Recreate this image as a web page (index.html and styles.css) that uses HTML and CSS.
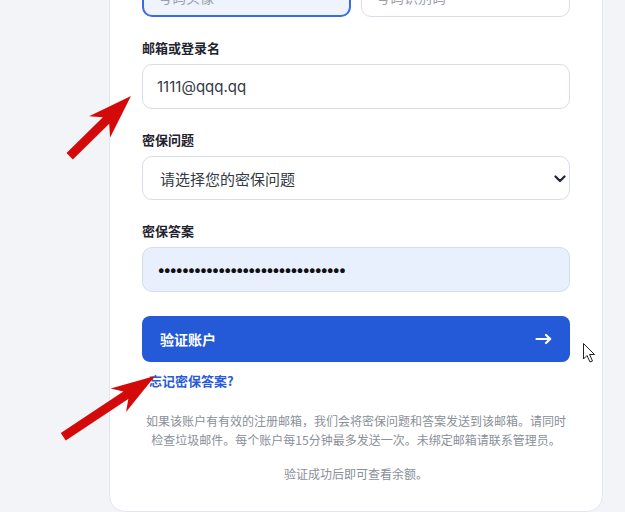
FILE: index.html
```html
<!DOCTYPE html>
<html lang="zh-CN">
<head>
<meta charset="utf-8">
<title>验证账户</title>
<link rel="stylesheet" href="styles.css">
</head>
<body>
<div class="page">
  <div class="card">
    <div class="row">
      <input class="input focused" type="text" placeholder="号码头像">
      <input class="input" type="text" placeholder="号码识别码">
    </div>

    <div class="field">
      <label class="label">邮箱或登录名</label>
      <input class="input" type="text" value="1111@qqq.qq">
    </div>

    <div class="field">
      <label class="label">密保问题</label>
      <div class="select-wrap">
        <select class="select">
          <option>请选择您的密保问题</option>
        </select>
        <svg class="chevron" width="12" height="8" viewBox="0 0 12 8"><path d="M1.5 1.5 L6 6 L10.5 1.5" fill="none" stroke="#1f2430" stroke-width="2.2" stroke-linecap="round" stroke-linejoin="round"/></svg>
      </div>
    </div>

    <div class="field">
      <label class="label">密保答案</label>
      <input class="input autofill" type="password" value="1234567890123456789012345678901">
    </div>

    <button class="btn">
      <span>验证账户</span>
      <svg width="18" height="12" viewBox="0 0 18 12"><path d="M1.5 6 H15 M11 2 L15.3 6 L11 10" fill="none" stroke="#fff" stroke-width="2.2" stroke-linecap="round" stroke-linejoin="round"/></svg>
    </button>

    <a class="link" href="#">忘记密保答案?</a>

    <p class="help">如果该账户有有效的注册邮箱，我们会将密保问题和答案发送到该邮箱。请同时检查垃圾邮件。每个账户每15分钟最多发送一次。未绑定邮箱请联系管理员。</p>
    <p class="note">验证成功后即可查看余额。</p>
  </div>
</div>

<svg class="annot" width="625" height="512" viewBox="0 0 625 512">
  <g transform="translate(131 96) rotate(-44.5)">
    <polygon points="0,0 -44,-15 -35,-4.5 -86,-4.5 -86,4.5 -35,4.5 -44,15" fill="#d40a0a"/>
  </g>
  <g transform="translate(155 376) rotate(-33.5)">
    <polygon points="0,0 -44,-14 -35,-4.5 -110,-4.5 -110,4.5 -35,4.5 -44,14" fill="#d40a0a"/>
  </g>
  <path d="M583.5 343.5 V359 L587 355.5 L590 362 L592.5 361 L589.6 354.5 L594.5 354.5 Z" fill="#fff" stroke="#222" stroke-width="1" stroke-linejoin="round"/>
</svg>
</body>
</html>
```
FILE: styles.css
```css
* { box-sizing: border-box; }
html, body { margin: 0; padding: 0; }
body {
  background: #f3f4f8;
  font-family: Inter, "Noto Sans CJK SC", sans-serif;
  width: 625px;
  height: 512px;
  overflow: hidden;
  position: relative;
}
.page {
  margin-top: -29px;
  padding-left: 109px;
}
.card {
  width: 494px;
  background: #fff;
  border: 1px solid #e3e6ee;
  border-radius: 16px;
  padding: 0 32px 28px;
}
.row {
  display: grid;
  grid-template-columns: 1fr 1fr;
  gap: 10px;
}
.input {
  display: block;
  width: 100%;
  height: 45px;
  border: 1px solid #d8dde8;
  border-radius: 10px;
  padding: 0 14px;
  font-family: Inter, "Noto Sans CJK SC", sans-serif;
  font-size: 15px;
  color: #333a45;
  background: #fff;
  outline: none;
}
.input::placeholder { color: #9aa0aa; }
.row .input { font-size: 14px; padding-top: 6px; }
.focused {
  border: 2px solid #3a6ce0;
  background: #eef3fd;
}
.autofill {
  background: #e8f0fe;
  color: #111;
  letter-spacing: -2.4px;
}
.field { margin-top: 22px; }
.label {
  display: block;
  font-size: 13px;
  line-height: 18px;
  font-weight: 700;
  color: #1f2430;
  margin-bottom: 7px;
  font-family: "Noto Sans CJK SC", sans-serif;
}
.select-wrap { position: relative; }
.select {
  display: block;
  width: 100%;
  height: 44px;
  appearance: none;
  -webkit-appearance: none;
  border: 1px solid #d8dde8;
  border-radius: 10px;
  padding: 0 17px;
  font-family: "Noto Sans CJK SC", sans-serif;
  font-size: 15px;
  color: #333a45;
  background: #fff;
  outline: none;
}
.chevron {
  position: absolute;
  right: 4px;
  top: 19px;
}
.btn {
  display: flex;
  align-items: center;
  justify-content: space-between;
  width: 100%;
  height: 46px;
  margin-top: 24px;
  border: none;
  border-radius: 8px;
  background: #2459d8;
  color: #fff;
  font-family: "Noto Sans CJK SC", sans-serif;
  font-size: 14px;
  font-weight: 700;
  padding: 0 17px 0 18px;
}
.link {
  display: block;
  margin-top: 10px;
  padding-left: 7px;
  font-family: "Noto Sans CJK SC", sans-serif;
  font-size: 13px;
  line-height: 18px;
  font-weight: 700;
  color: #2a5bd8;
  text-decoration: none;
}
.help {
  margin: 21px 0 0;
  text-align: center;
  font-family: "Noto Sans CJK SC", sans-serif;
  font-size: 12px;
  line-height: 19px;
  color: #8a8f99;
}
.note {
  margin: 15px 0 0;
  text-align: center;
  font-family: "Noto Sans CJK SC", sans-serif;
  font-size: 12px;
  line-height: 19px;
  color: #8a8f99;
}
.annot {
  position: absolute;
  left: 0;
  top: 0;
  pointer-events: none;
}
```
